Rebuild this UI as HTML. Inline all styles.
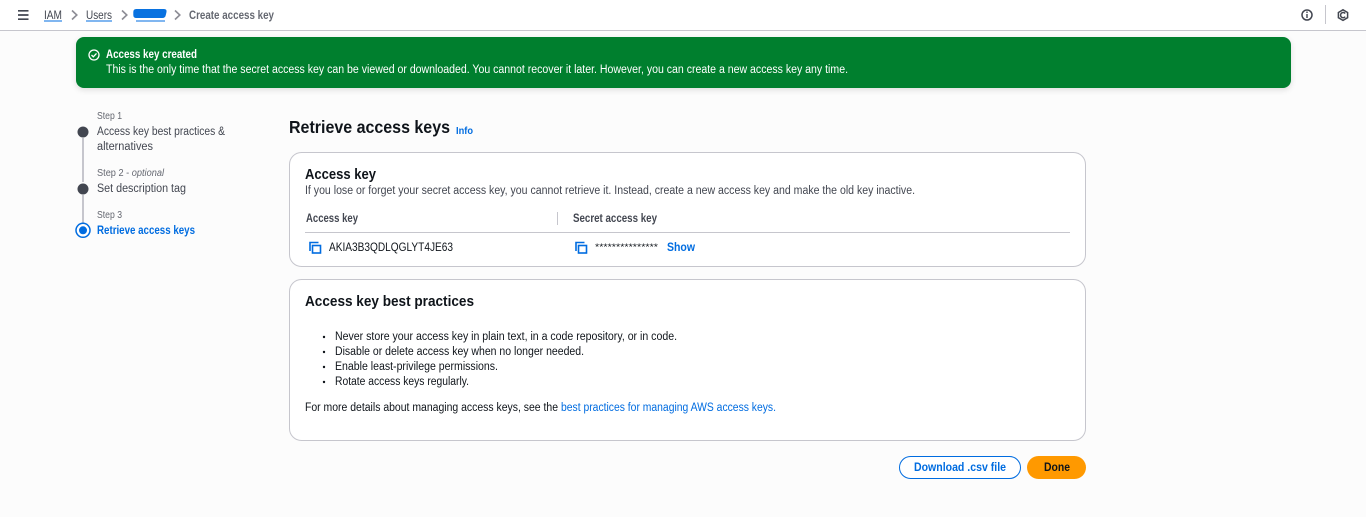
<!DOCTYPE html>
<html lang="en"><head><meta charset="utf-8"><title>Create access key</title>
<style>
html,body{margin:0;padding:0;width:1366px;height:517px;overflow:hidden;background:#fcfcfc}
svg{display:block}
text{font-family:"Liberation Sans",sans-serif;font-size:11.5px;fill:#0f141a}
.b{font-weight:700}
.g{fill:#424650}
.bl{fill:#006ce0}
.w{fill:#fff}
.s{font-size:9.8px;fill:#656871}
</style></head><body>
<svg width="1366" height="517" viewBox="0 0 1366 517" xmlns="http://www.w3.org/2000/svg">
<defs><filter id="sh" x="-5%" y="-30%" width="110%" height="170%"><feDropShadow dx="0" dy="2" stdDeviation="3" flood-color="#000" flood-opacity=".12"/></filter></defs>
<rect width="1366" height="30" fill="#fff"/>
<rect y="30" width="1366" height="1" fill="#c6c6cd"/>
<path d="M18 10.800h10.500M18 15h10.500M18 19.200h10.500" stroke="#424650" stroke-width="1.700" fill="none"/>
<text x="44" y="19" textLength="18" lengthAdjust="spacingAndGlyphs" class="g">IAM</text>
<rect x="44" y="20.500" width="18" height="1" fill="#006ce0"/>
<path d="M72 10.500l4.800 4.500-4.800 4.500" stroke="#8c8c94" stroke-width="1.600" fill="none"/>
<text x="86" y="19" textLength="26" lengthAdjust="spacingAndGlyphs" class="g">Users</text>
<rect x="86" y="20.500" width="26" height="1" fill="#006ce0"/>
<path d="M122 10.500l4.800 4.500-4.800 4.500" stroke="#8c8c94" stroke-width="1.600" fill="none"/>
<path d="M136 9h28q3 0 2.500 3l-.7 3q-.5 3-3.500 3h-26q-3 0-3-3l0-3q0-3 3-3z" fill="#0972e0"/>
<rect x="136" y="20.500" width="29" height="1" fill="#006ce0"/>
<path d="M175 10.500l4.800 4.500-4.800 4.500" stroke="#8c8c94" stroke-width="1.600" fill="none"/>
<text x="189" y="19" textLength="85" lengthAdjust="spacingAndGlyphs" style="fill:#656871;font-weight:700">Create access key</text>
<circle cx="1307" cy="15" r="5" fill="none" stroke="#424650" stroke-width="1.500"/>
<path d="M1307 14v4M1307 11.500v1.500" stroke="#424650" stroke-width="1.400"/>
<rect x="1325" y="5" width="1" height="19" fill="#c6c6cd"/>
<path d="M1343 9.800l4.600 2.700v5.200l-4.600 2.700-4.600-2.700v-5.200z" fill="none" stroke="#424650" stroke-width="1.500"/>
<path d="M1345.200 13.500a2.600 2.600 0 1 0 0 3.200" fill="none" stroke="#424650" stroke-width="1.500"/>

<rect x="76" y="37" width="1215" height="51" rx="8" fill="#037f2f" filter="url(#sh)"/>
<circle cx="94" cy="55" r="5" fill="none" stroke="#fff" stroke-width="1.300"/>
<path d="M91.500 55l1.800 1.800 3.200-3.400" fill="none" stroke="#fff" stroke-width="1.300"/>
<text x="106" y="58" textLength="91" lengthAdjust="spacingAndGlyphs" class="b w">Access key created</text>
<text x="106" y="73" textLength="742" lengthAdjust="spacingAndGlyphs" class="w">This is the only time that the secret access key can be viewed or downloaded. You cannot recover it later. However, you can create a new access key any time.</text>

<text x="97" y="119" textLength="25" lengthAdjust="spacingAndGlyphs" class="s">Step 1</text>
<text x="97" y="135" textLength="128" lengthAdjust="spacingAndGlyphs" class="g">Access key best practices &amp;</text>
<text x="97" y="150" textLength="56" lengthAdjust="spacingAndGlyphs" class="g">alternatives</text>
<text x="97" y="176" textLength="67" lengthAdjust="spacingAndGlyphs" class="s">Step 2 - <tspan font-style="italic">optional</tspan></text>
<text x="97" y="192" textLength="89" lengthAdjust="spacingAndGlyphs" class="g">Set description tag</text>
<text x="97" y="218" textLength="25" lengthAdjust="spacingAndGlyphs" class="s">Step 3</text>
<text x="97" y="234" textLength="98" lengthAdjust="spacingAndGlyphs" class="b bl">Retrieve access keys</text>
<rect x="82" y="138" width="2" height="44" fill="#c6c6cd"/>
<rect x="82" y="195" width="2" height="28" fill="#c6c6cd"/>
<circle cx="83" cy="132" r="5.500" fill="#424650"/>
<circle cx="83" cy="189" r="5.500" fill="#424650"/>
<circle cx="83" cy="230.300" r="7" fill="#fff" stroke="#006ce0" stroke-width="1.500"/>
<circle cx="83" cy="230.300" r="4" fill="#006ce0"/>

<text x="289" y="133" textLength="161" lengthAdjust="spacingAndGlyphs" class="b" style="font-size:17.500px">Retrieve access keys</text>
<text x="456" y="134" textLength="17" lengthAdjust="spacingAndGlyphs" class="b bl" style="font-size:9.800px">Info</text>

<rect x="289.500" y="152.500" width="796" height="114" rx="12" fill="#fff" stroke="#c6c6cd"/>
<text x="305" y="179" textLength="71" lengthAdjust="spacingAndGlyphs" class="b" style="font-size:14.500px">Access key</text>
<text x="305" y="194" textLength="610" lengthAdjust="spacingAndGlyphs" class="g">If you lose or forget your secret access key, you cannot retrieve it. Instead, create a new access key and make the old key inactive.</text>
<text x="306" y="222" textLength="52" lengthAdjust="spacingAndGlyphs" class="b g">Access key</text>
<rect x="557" y="212" width="1" height="13" fill="#c6c6cd"/>
<text x="573" y="222" textLength="84" lengthAdjust="spacingAndGlyphs" class="b g">Secret access key</text>
<rect x="305" y="232" width="765" height="1" fill="#c6c6cd"/>
<g fill="none" stroke="#006ce0" stroke-width="1.600">
<rect x="312.500" y="245.500" width="8" height="7.500"/><path d="M310 251v-8.500h8.500"/>
<rect x="578.500" y="245.500" width="8" height="7.500"/><path d="M576 251v-8.500h8.500"/>
</g>
<text x="329" y="251" textLength="124" lengthAdjust="spacingAndGlyphs">AKIA3B3QDLQGLYT4JE63</text>
<text x="595" y="250" textLength="63" lengthAdjust="spacingAndGlyphs" style="font-size:9px">***************</text>
<text x="667" y="251" textLength="28" lengthAdjust="spacingAndGlyphs" class="b bl">Show</text>

<rect x="289.500" y="279.500" width="796" height="161" rx="12" fill="#fff" stroke="#c6c6cd"/>
<text x="305" y="306" textLength="169" lengthAdjust="spacingAndGlyphs" class="b" style="font-size:14.500px">Access key best practices</text>
<g fill="#0f141a"><circle cx="324" cy="337" r="1.200"/><circle cx="324" cy="352" r="1.200"/><circle cx="324" cy="367" r="1.200"/><circle cx="324" cy="382" r="1.200"/></g>
<text x="335" y="340" textLength="342" lengthAdjust="spacingAndGlyphs">Never store your access key in plain text, in a code repository, or in code.</text>
<text x="335" y="355" textLength="249" lengthAdjust="spacingAndGlyphs">Disable or delete access key when no longer needed.</text>
<text x="335" y="370" textLength="163" lengthAdjust="spacingAndGlyphs">Enable least-privilege permissions.</text>
<text x="335" y="385" textLength="134" lengthAdjust="spacingAndGlyphs">Rotate access keys regularly.</text>
<text x="305" y="411" textLength="253" lengthAdjust="spacingAndGlyphs">For more details about managing access keys, see the</text>
<text x="561" y="411" textLength="215" lengthAdjust="spacingAndGlyphs" class="bl">best practices for managing AWS access keys.</text>

<rect x="899.500" y="456.500" width="121" height="22" rx="11" fill="#fff" stroke="#006ce0"/>
<text x="914" y="471" textLength="92" lengthAdjust="spacingAndGlyphs" class="b bl">Download .csv file</text>
<rect x="1027" y="456" width="59" height="23" rx="11.500" fill="#ff9900"/>
<text x="1044" y="471" textLength="26" lengthAdjust="spacingAndGlyphs" class="b">Done</text>
</svg>
</body></html>
